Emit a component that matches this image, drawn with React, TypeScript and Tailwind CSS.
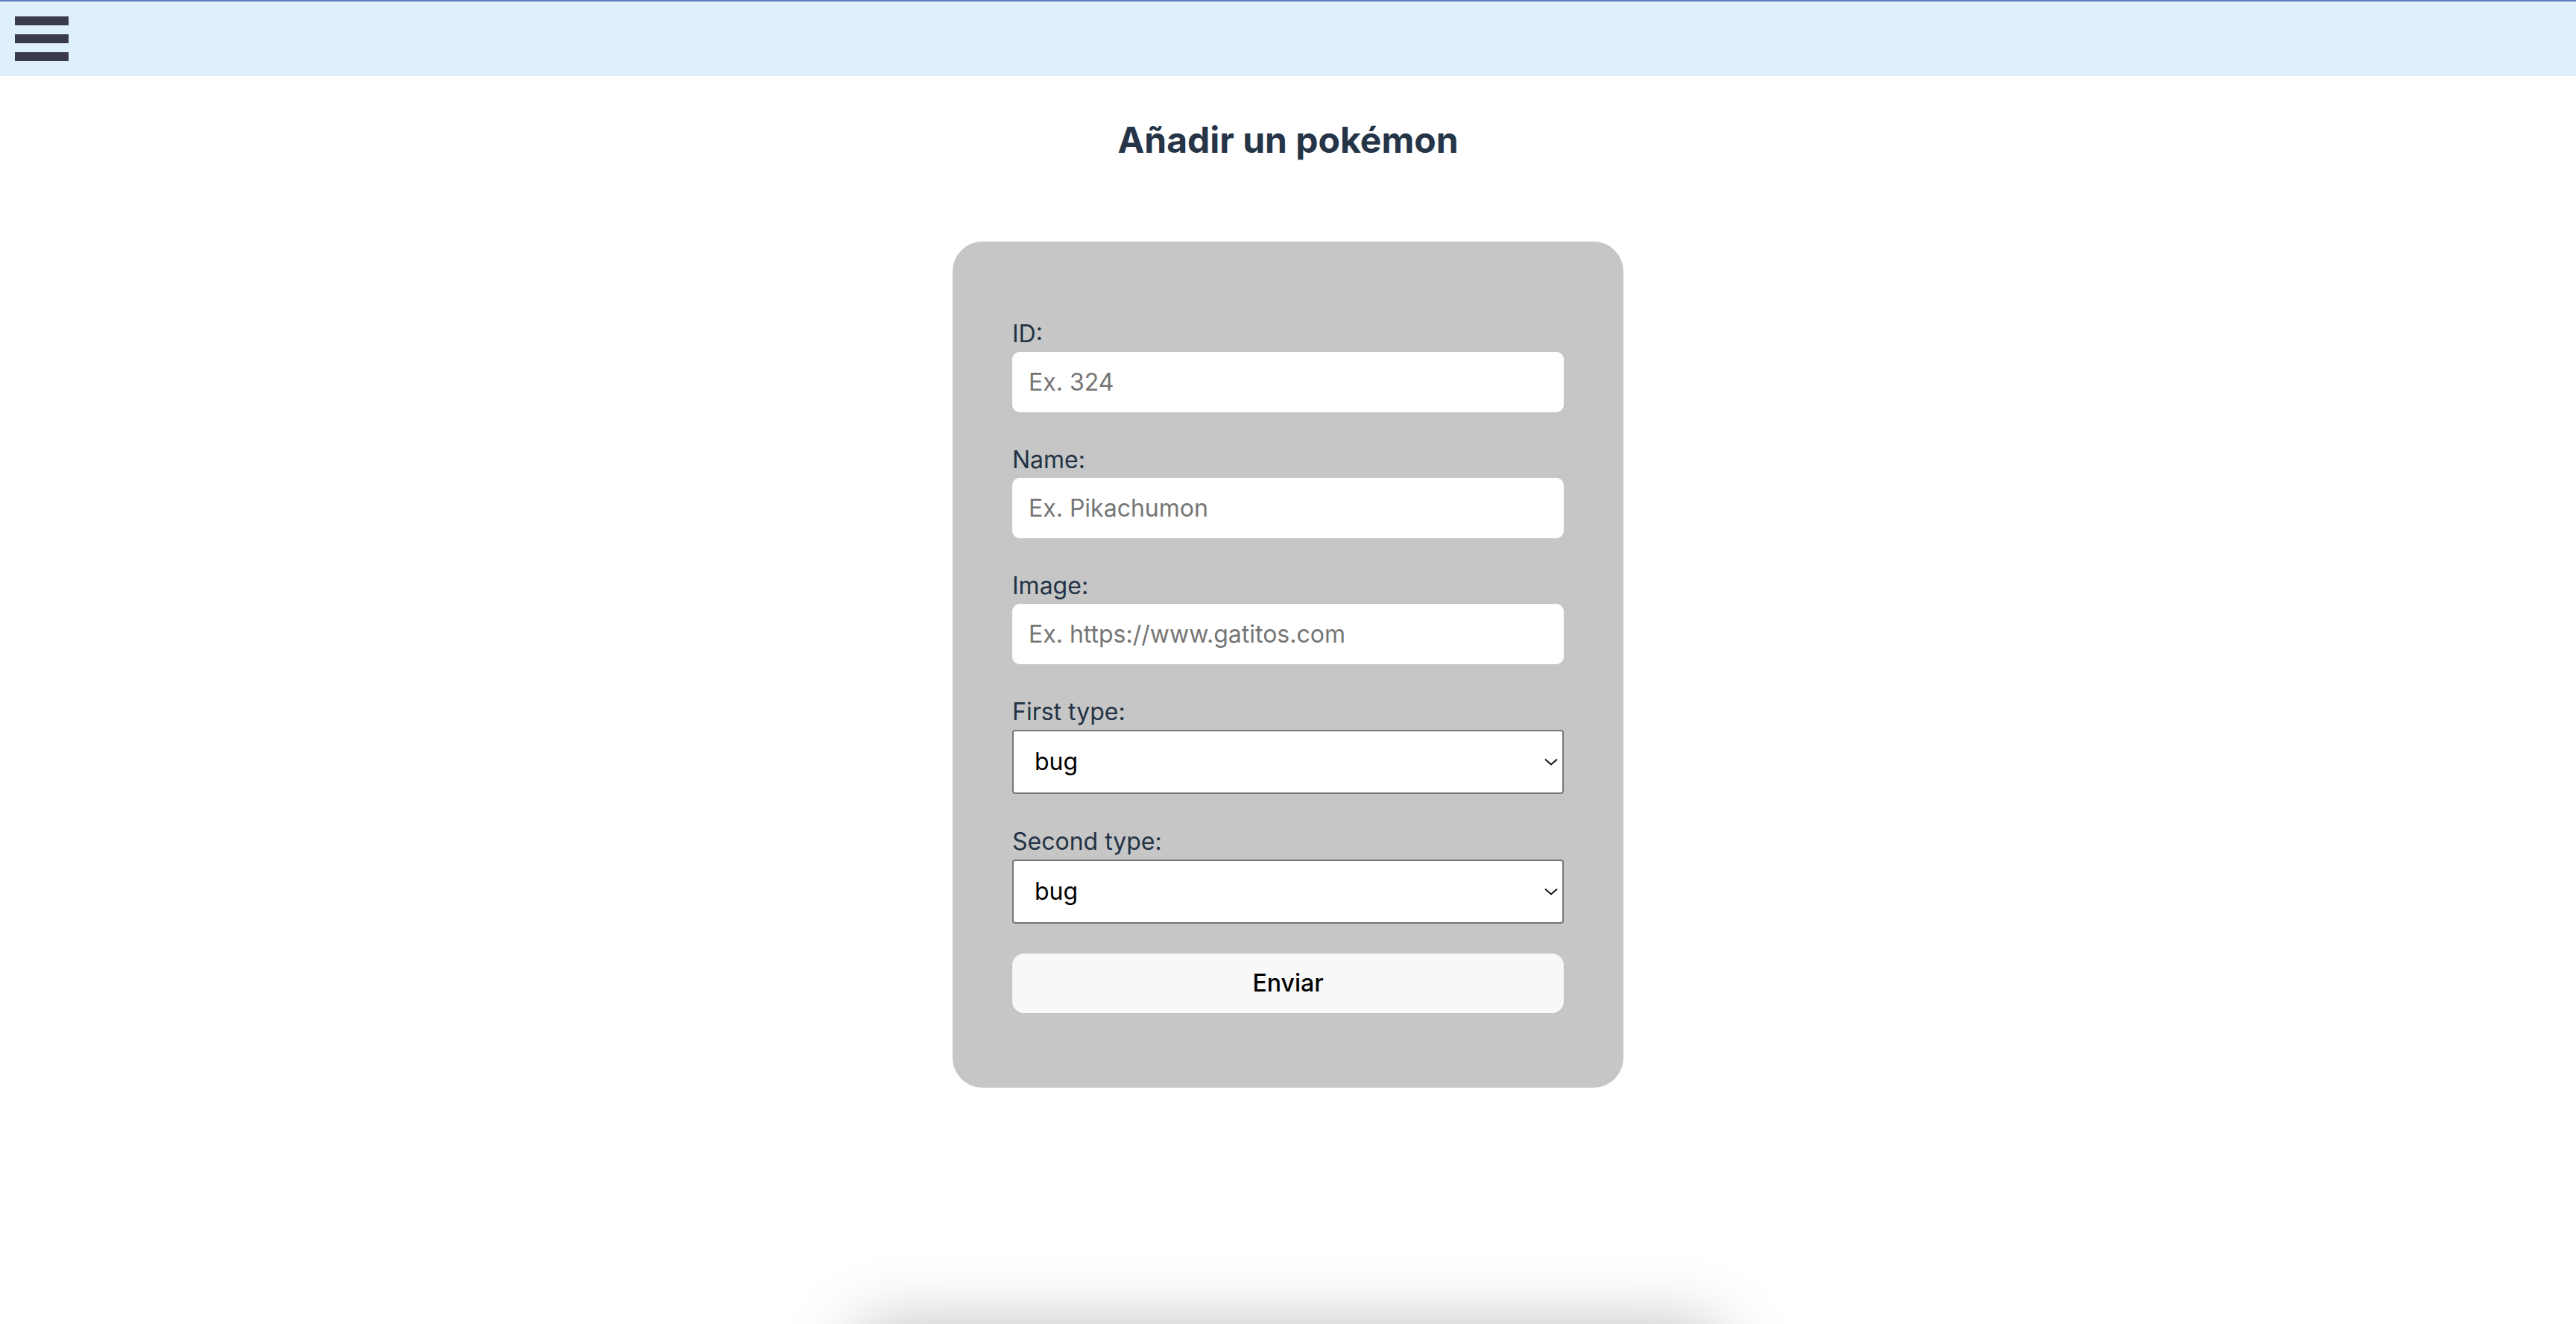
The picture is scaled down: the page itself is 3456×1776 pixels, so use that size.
import { useState } from 'react';

const types = ['bug', 'dark', 'dragon', 'electric', 'fairy', 'fighting', 'fire', 'flying', 'ghost', 'grass', 'ground', 'ice', 'normal', 'poison', 'psychic', 'rock', 'steel', 'water'];

function TextField({ label, placeholder }: { label: string; placeholder: string }) {
  return (
    <label className="flex flex-col">
      <span className="text-[32px] leading-[48px] text-[#233345]">{label}</span>
      <input
        type="text"
        placeholder={placeholder}
        className="h-[81px] w-full rounded-[10px] bg-white px-[22px] text-[32px] text-black placeholder-[#757575] focus:outline-none"
      />
    </label>
  );
}

function TypeSelect({ label }: { label: string }) {
  const [value, setValue] = useState('bug');
  return (
    <label className="flex flex-col">
      <span className="text-[32px] leading-[48px] text-[#233345]">{label}</span>
      <div className="relative">
        <select
          value={value}
          onChange={(e) => setValue(e.target.value)}
          className="h-[86px] w-full appearance-none rounded-[4px] border-2 border-[#767676] bg-white pl-[28px] text-[32px] text-black focus:outline-none"
        >
          {types.map(t => (
            <option key={t} value={t}>{t}</option>
          ))}
        </select>
        {/* chevron */}
        <svg className="pointer-events-none absolute right-[8px] top-1/2 -translate-y-1/2" width="18" height="10" viewBox="0 0 18 10" fill="none">
          <path d="M1 1.5 L9 8.5 L17 1.5" stroke="#111" strokeWidth="2" />
        </svg>
      </div>
    </label>
  );
}

export default function App() {
  return (
    <div className="h-screen overflow-hidden bg-white font-['Inter',sans-serif]">
      <div className="min-h-screen">
        {/* Header */}
        <header className="h-[102px] border-t-2 border-[#5a7db5] bg-[#dff0fd] pl-[20px] pt-[20px]">
          <button className="flex flex-col gap-[12px]">
            <span className="block h-[12px] w-[72px] bg-[#393b4a]" />
            <span className="block h-[12px] w-[72px] bg-[#393b4a]" />
            <span className="block h-[12px] w-[72px] bg-[#393b4a]" />
          </button>
        </header>

        <main className="flex flex-col items-center">
          <h1 className="mt-[50px] text-[48px] font-bold leading-[72px] text-[#253447]">
            Añadir un pokémon
          </h1>

          <form
            onSubmit={(e) => e.preventDefault()}
            className="mt-[100px] flex w-[900px] flex-col gap-[40px] rounded-[40px] bg-[#c6c6c6] px-[80px] py-[100px]"
          >
            <TextField label="ID:" placeholder="Ex. 324" />
            <TextField label="Name:" placeholder="Ex. Pikachumon" />
            <TextField label="Image:" placeholder="Ex. https://www.gatitos.com" />
            <TypeSelect label="First type:" />
            <TypeSelect label="Second type:" />
            <button
              type="submit"
              className="h-[80px] w-full rounded-[16px] bg-[#f8f8f8] text-[32px] font-medium text-black"
            >
              Enviar
            </button>
          </form>
        </main>
      </div>

      {/* Footer sits just below the fold, only its shadow shows */}
      <footer className="mx-auto h-[200px] w-[1180px] rounded-t-[60px] bg-white shadow-[0_0_90px_rgba(0,0,0,0.25)]" />
    </div>
  );
}
